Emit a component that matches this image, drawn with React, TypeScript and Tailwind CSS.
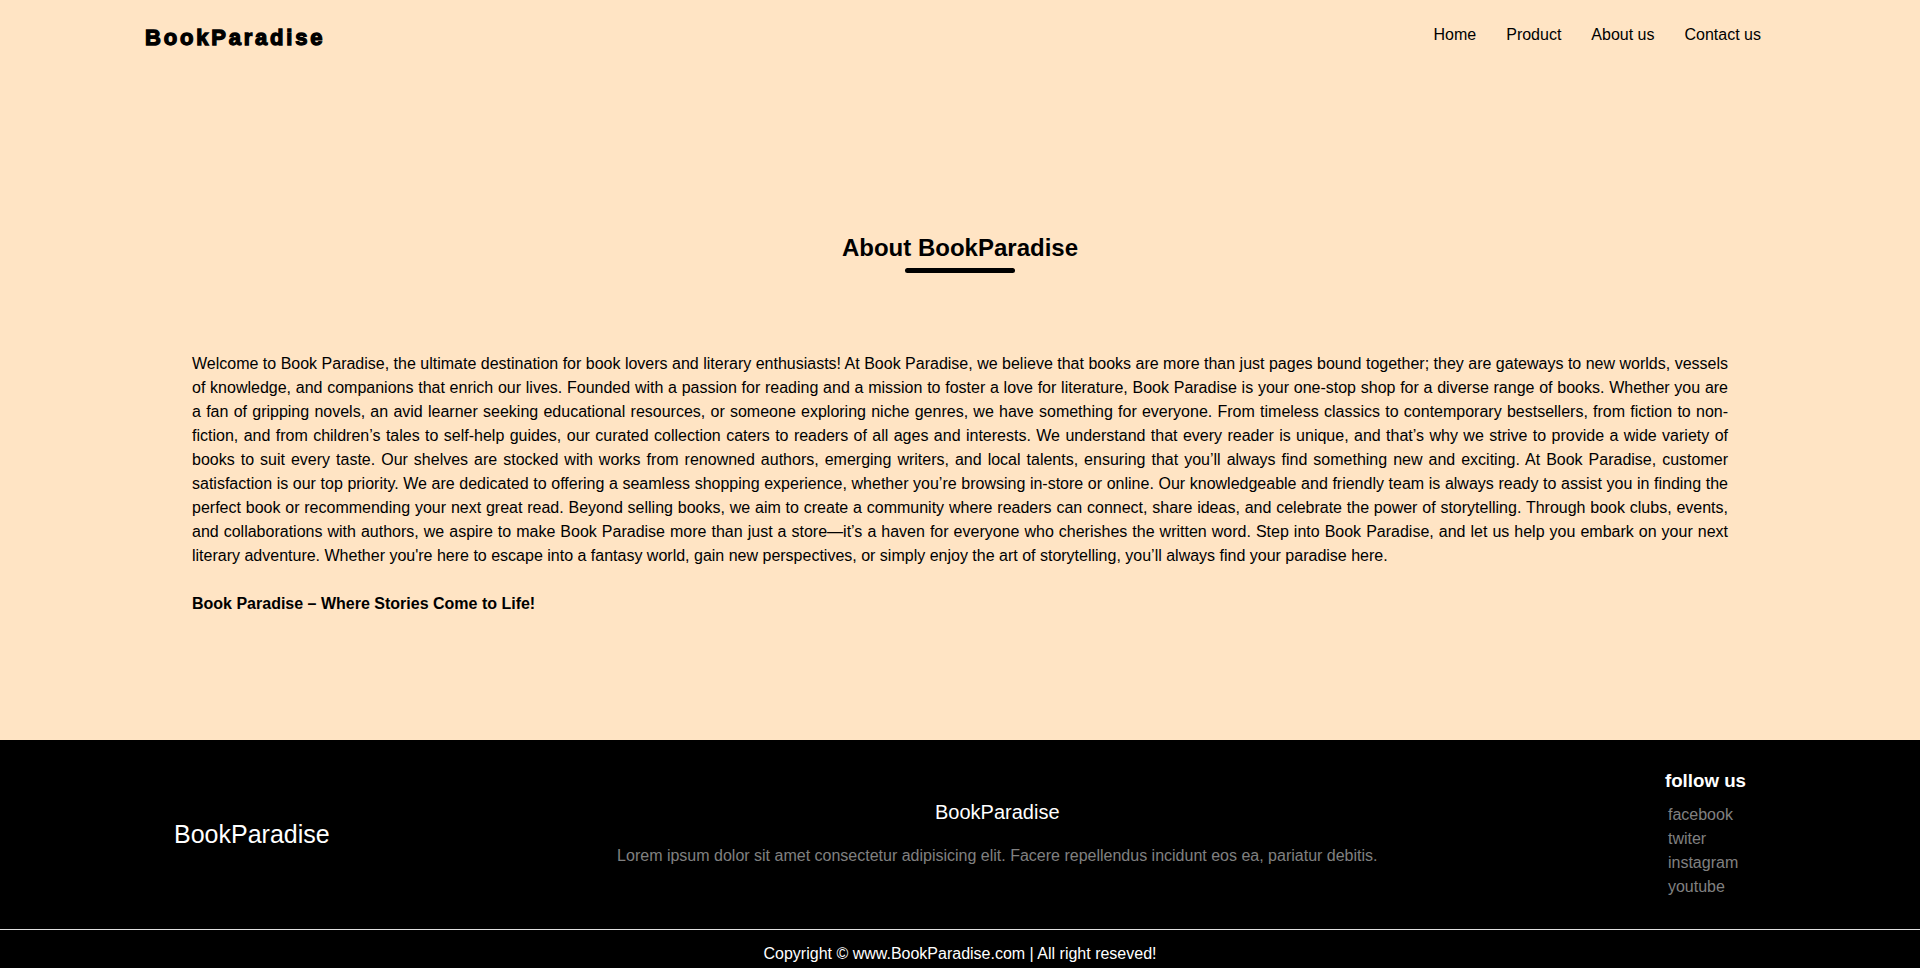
import React from 'react';

const App = () => {
  const navLinks = ['Home', 'Product', 'About us', 'Contact us'];
  const socials = ['facebook', 'twiter', 'instagram', 'youtube'];

  return (
    <div className="min-h-screen bg-[#ffe4c4] font-['Liberation_Sans',Arial,sans-serif] text-black">
      {/* header */}
      <header className="flex h-[70px] items-center justify-between pl-[145px] pr-[159px]">
        <h1 className="mt-[4px] text-[22px] font-bold leading-[25px] tracking-[2.8px] [-webkit-text-stroke:1.3px_black]">
          BookParadise
        </h1>
        <nav>
          <ul className="flex gap-[30px] text-base leading-[18px]">
            {navLinks.map((link) => (
              <li key={link}>
                <a href="#">{link}</a>
              </li>
            ))}
          </ul>
        </nav>
      </header>

      {/* about */}
      <section className="px-[192px] pt-[164px] pb-[124px]">
        <h2 className="text-center text-2xl font-bold leading-[28px]">About BookParadise</h2>
        <div className="mx-auto mt-[6px] h-[5px] w-[110px] rounded-full bg-black"></div>
        <p className="mt-[79px] text-justify text-base leading-6">
          Welcome to Book Paradise, the ultimate destination for book lovers and literary enthusiasts! At Book Paradise,
          we believe that books are more than just pages bound together; they are gateways to new worlds, vessels of
          knowledge, and companions that enrich our lives. Founded with a passion for reading and a mission to foster a
          love for literature, Book Paradise is your one-stop shop for a diverse range of books. Whether you are a fan of
          gripping novels, an avid learner seeking educational resources, or someone exploring niche genres, we have
          something for everyone. From timeless classics to contemporary bestsellers, from fiction to non-fiction, and
          from children’s tales to self-help guides, our curated collection caters to readers of all ages and interests.
          We understand that every reader is unique, and that’s why we strive to provide a wide variety of books to suit
          every taste. Our shelves are stocked with works from renowned authors, emerging writers, and local talents,
          ensuring that you’ll always find something new and exciting. At Book Paradise, customer satisfaction is our top
          priority. We are dedicated to offering a seamless shopping experience, whether you’re browsing in-store or
          online. Our knowledgeable and friendly team is always ready to assist you in finding the perfect book or
          recommending your next great read. Beyond selling books, we aim to create a community where readers can
          connect, share ideas, and celebrate the power of storytelling. Through book clubs, events, and collaborations
          with authors, we aspire to make Book Paradise more than just a store—it’s a haven for everyone who cherishes the
          written word. Step into Book Paradise, and let us help you embark on your next literary adventure. Whether
          you're here to escape into a fantasy world, gain new perspectives, or simply enjoy the art of storytelling,
          you’ll always find your paradise here.
        </p>
        <p className="mt-6 text-base font-bold leading-6">Book Paradise – Where Stories Come to Life!</p>
      </section>

      {/* footer */}
      <footer className="bg-black">
        <div className="flex h-[189px] items-center justify-between px-[174px]">
          <div className="text-[25px] leading-[29px] text-white">BookParadise</div>
          <div className="mb-[3px] flex flex-col items-center">
            <h3 className="text-[20px] leading-[23px] text-white">BookParadise</h3>
            <p className="mt-[23px] text-base leading-[18px] text-[#808080]">
              Lorem ipsum dolor sit amet consectetur adipisicing elit. Facere repellendus incidunt eos ea, pariatur
              debitis.
            </p>
          </div>
          <div className="flex flex-col">
            <h3 className="text-[18.72px] font-bold leading-[21.5px] text-white">follow us</h3>
            <ul className="mt-[11px] pl-[3px] text-base leading-6 text-[#808080]">
              {socials.map((s) => (
                <li key={s}>
                  <a href="#">{s}</a>
                </li>
              ))}
            </ul>
          </div>
        </div>
        <div className="border-t border-[#e0e0e0] pt-[15px] pb-[15px] text-center text-base leading-[18px] text-white">
          Copyright © www.BookParadise.com | All right reseved!
        </div>
      </footer>
    </div>
  );
};

export default App;
